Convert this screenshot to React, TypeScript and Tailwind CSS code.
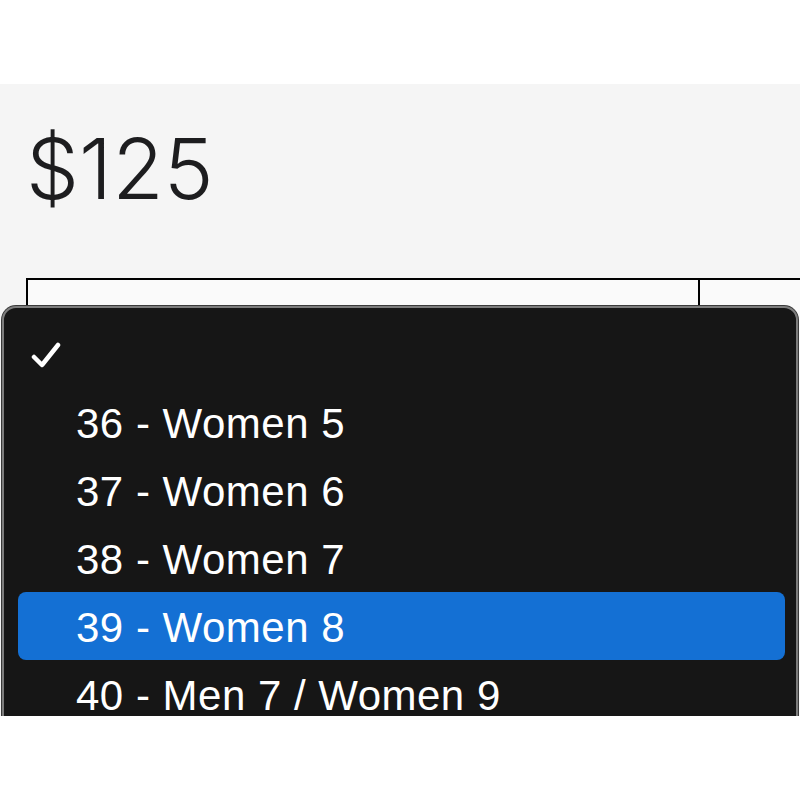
import React from "react";

const items = [
  "36 - Women 5",
  "37 - Women 6",
  "38 - Women 7",
  "39 - Women 8",
  "40 - Men 7 / Women 9",
];

export default function App() {
  return (
    <div className="w-[800px] h-[800px] bg-white overflow-hidden">
      <div className="h-[84px] bg-white" />
      <div className="relative h-[632px] bg-[#f5f5f5] overflow-hidden">
        <div
          className="pt-[43px] pl-[26px] text-[84px] leading-none font-light text-[#1d1d1f]"
          style={{ fontFamily: "Inter, 'Noto Sans', sans-serif" }}
        >
          $125
        </div>
        <div className="mt-[67px] ml-[26px] flex h-[500px] w-[800px]">
          <div className="w-[674px] border-2 border-black bg-[#fafafa]" />
          <div className="flex-1 border-y-2 border-r-2 border-black bg-[#fafafa]" />
        </div>
        <div
          className="absolute left-[2px] top-[222px] w-[796px] h-[500px] rounded-[14px] border-2 border-[#7d7d7d] bg-[#161616] pt-[12px] shadow-[0_0_0_1px_#3a3a3a]"
          style={{ fontFamily: "'Liberation Sans', Arial, sans-serif" }}
        >
          <div className="ml-[14px] mr-[11px] h-[68px] flex items-center pl-[13px] pt-[3px]">
            <svg width="32" height="30" viewBox="0 0 32 30" fill="none">
              <path d="M3 16 L11 24 L27 4" stroke="white" strokeWidth="4.5" strokeLinecap="round" strokeLinejoin="round" />
            </svg>
          </div>
          {items.map((t, i) => (
            <div
              key={t}
              className={
                i === 3
                  ? "ml-[14px] mr-[11px] h-[68px] flex items-center pl-[58px] pt-[3px] rounded-[8px] bg-[#1470d4] text-white text-[42px] leading-none tracking-[0.5px]"
                  : "ml-[14px] mr-[11px] h-[68px] flex items-center pl-[58px] pt-[3px] text-white text-[42px] leading-none tracking-[0.5px]"
              }
            >
              {t}
            </div>
          ))}
        </div>
      </div>
      <div className="h-[84px] bg-white" />
    </div>
  );
}
